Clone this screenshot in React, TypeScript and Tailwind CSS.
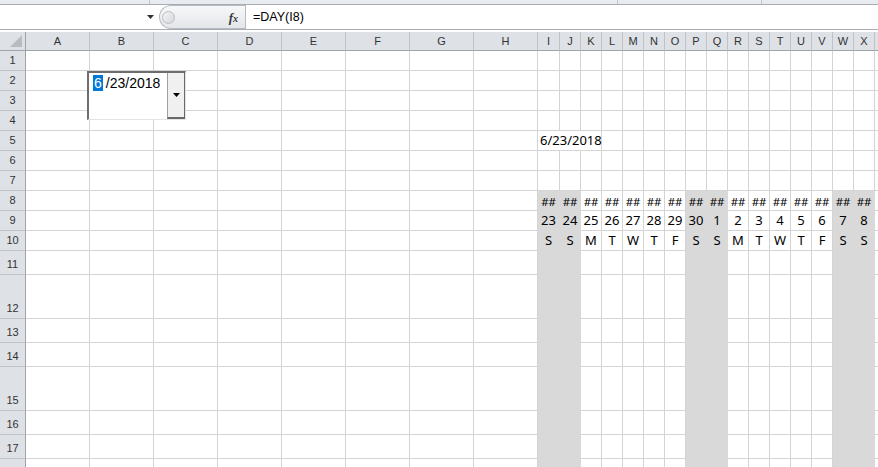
import React from "react";

const COLS = ["A", "B", "C", "D", "E", "F", "G", "H", "I", "J", "K", "L", "M", "N", "O", "P", "Q", "R", "S", "T", "U", "V", "W", "X", "Y"];
const ROW_HEIGHTS = [20, 20, 20, 20, 20, 20, 20, 20, 20, 20, 24, 44, 24, 24, 44, 24, 24, 24];
const DATES = ["23", "24", "25", "26", "27", "28", "29", "30", "1", "2", "3", "4", "5", "6", "7", "8"];
const DAYS = ["S", "S", "M", "T", "W", "T", "F", "S", "S", "M", "T", "W", "T", "F", "S", "S"];
const SHADED = new Set(["I", "J", "P", "Q", "W", "X"]);

const cellFont = { fontFamily: '"Noto Sans", "Liberation Sans", sans-serif' };

function Cell({ col, row }: { col: string; row: number }) {
  const ci = COLS.indexOf(col);
  const narrow = ci >= 8 && col !== "Y";
  const di = ci - 8;
  const shaded = narrow && row >= 8 && SHADED.has(col);
  let content: React.ReactNode = null;
  let cls = shaded
    ? "relative border-r border-b border-[#d9d9d9] bg-[#d9d9d9] flex items-end justify-center pb-[3px] text-[13px] leading-none text-black"
    : "relative border-r border-b border-[#d4d4d4] bg-white flex items-end justify-center pb-[3px] text-[13px] leading-none text-black";
  if (row === 5 && col === "I") {
    cls = "relative z-10 border-b border-[#d4d4d4] flex items-end justify-start pb-[3px] text-[13px] leading-none text-black";
  }
  if (row === 5 && col === "J") {
    cls = "relative border-b border-[#d4d4d4] bg-white";
  }
  if (row === 5 && col === "I") {
    content = <span className="pl-[2px] whitespace-nowrap">6/23/2018</span>;
  }
  if (narrow && row === 8) content = <span className="text-[11.5px] whitespace-nowrap tracking-[-0.3px]">##</span>;
  if (narrow && row === 9) content = <span className="whitespace-nowrap">{DATES[di]}</span>;
  if (narrow && row === 10) content = <span className="whitespace-nowrap">{DAYS[di]}</span>;
  return (
    <div className={cls} style={cellFont}>
      {content}
    </div>
  );
}

export default function App() {
  return (
    <div
      className="relative w-[878px] h-[467px] overflow-hidden bg-white"
      style={{ fontFamily: '"Liberation Sans", Arial, sans-serif' }}
    >
      {/* ribbon bottom strip */}
      <div className="flex h-[5px] bg-[#e8ebef] border-b border-[#a8adb3]">
        <div className="w-[150px] border-r border-[#c3c7cc]" />
        <div className="w-[468px] border-r border-[#c3c7cc]" />
        <div className="w-[144px] border-r border-[#c3c7cc]" />
        <div className="flex-1" />
      </div>

      {/* formula bar */}
      <div className="flex h-[25px] border-b border-[#a8adb3] bg-white">
        <div className="w-[159px] flex items-center justify-end pr-[5px]">
          <svg width="7" height="4" viewBox="0 0 7 4">
            <path d="M0 0 H7 L3.5 4 Z" fill="#333" />
          </svg>
        </div>
        <div className="relative w-[86px] h-full flex items-center">
          <div className="absolute inset-y-0 left-0 right-0 rounded-l-[12px] border-l border-y border-[#b7bbc1] bg-gradient-to-b from-[#f7f8f9] to-[#e3e6ea]" />
          <div className="relative ml-[3px] w-[13px] h-[13px] rounded-full border border-[#b9bdc2] bg-gradient-to-br from-[#f4f5f6] to-[#d4d7db]" />
          <div
            className="relative ml-auto mr-[7px] text-[13px] italic font-bold text-[#3a3a3a] leading-none"
            style={{ fontFamily: '"Liberation Serif", serif' }}
          >
            f<span className="text-[10px]">x</span>
          </div>
        </div>
        <div className="flex-1 border-l border-[#b7bbc1] flex items-center pl-[7px] text-[12.5px] text-black">
          =DAY(I8)
        </div>
      </div>

      <div className="h-[2px] bg-white" />

      {/* grid */}
      <div className="grid grid-cols-[26px_repeat(8,64px)_22px_repeat(16,21px)]">
        {/* header row */}
        <div className="h-[19px] bg-[#dee1e6] border-r border-b border-[#9ea3a9] flex items-end justify-end pr-[3px] pb-[3px]">
          <svg width="12" height="12" viewBox="0 0 12 12">
            <path d="M12 0 V12 H0 Z" fill="#b8bcc1" />
          </svg>
        </div>
        {COLS.map((c) => (
          <div
            key={c}
            className="h-[19px] bg-[#dee1e6] border-r border-[#bfc3c8] border-b border-b-[#9ea3a9] flex items-center justify-center text-[11px] text-[#333]"
          >
            {c === "Y" ? null : c}
          </div>
        ))}

        {ROW_HEIGHTS.map((h, ri) => {
          const row = ri + 1;
          return (
            <React.Fragment key={row}>
              <div
                className="bg-[#dee1e6] border-r border-r-[#9ea3a9] border-b border-b-[#bfc3c8] flex items-end justify-center pb-[4px] text-[11px] leading-none text-[#333]"
                style={{ height: h }}
              >
                {row <= 17 ? row : null}
              </div>
              {COLS.map((c) => (
                <Cell key={c} col={c} row={row} />
              ))}
            </React.Fragment>
          );
        })}
      </div>

      {/* date picker control (ActiveX overlay) */}
      <div className="absolute left-[87px] top-[71px] w-[99px] h-[49px] flex bg-white border-t-2 border-l-2 border-t-[#6e6e6e] border-l-[#6e6e6e] border-b border-r border-b-[#e3e3e3] border-r-[#e3e3e3]">
        <div className="flex-1 flex items-start pt-[2px] pl-[4px] text-[14px] text-black">
          <span className="bg-[#0078d7] text-white px-[1px] h-[16px] leading-[16px]">6</span>
          <span className="ml-[3px] h-[16px] leading-[16px]">/23/2018</span>
        </div>
        <div className="w-[18px] h-full bg-[#f0f0f0] border-l border-l-[#a0a0a0] border-r border-r-[#696969] border-b-2 border-b-[#696969] flex items-center justify-center">
          <svg width="7" height="4" viewBox="0 0 7 4">
            <path d="M0 0 H7 L3.5 4 Z" fill="#000" />
          </svg>
        </div>
      </div>
    </div>
  );
}
